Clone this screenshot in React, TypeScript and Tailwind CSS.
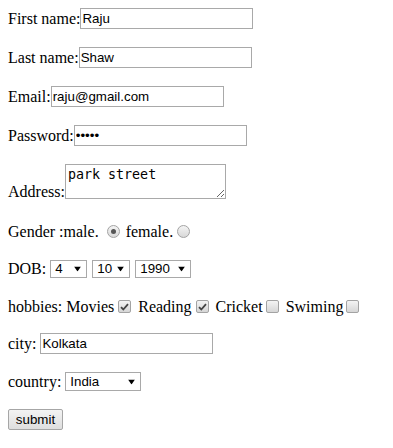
import React from "react";

const serif = "font-['Liberation_Serif','Times_New_Roman',serif]";
const sans = "font-['Liberation_Sans',Arial,sans-serif]";

// plain text field, old-style grey border
function TextField({ value, type = "text", width = "w-[173px]" }: { value: string; type?: string; width?: string }) {
  return (
    <input
      type={type}
      defaultValue={value}
      className={`${sans} ${width} h-[21px] border border-[#a9a9a9] bg-white px-[1px] text-[13.33px] text-black outline-none`}
    />
  );
}

function Arrow() {
  return (
    <svg width="7" height="5" viewBox="0 0 7 5" className="pointer-events-none absolute top-1/2 right-[6px] -translate-y-1/2">
      <path d="M0 0h7L3.5 5z" fill="#000" />
    </svg>
  );
}

function Select({ value, options, width, height = "h-[18px]" }: { value: string; options: string[]; width: string; height?: string }) {
  return (
    <span className="relative inline-flex">
      <select
        defaultValue={value}
        className={`${sans} ${width} ${height} appearance-none border border-[#a9a9a9] bg-white pl-[4px] text-[13.33px] leading-none text-black outline-none`}
      >
        {options.map((o) => (
          <option key={o}>{o}</option>
        ))}
      </select>
      <Arrow />
    </span>
  );
}

function Radio({ checked, className }: { checked?: boolean; className?: string }) {
  return (
    <span
      className={`relative inline-flex h-[13px] w-[13px] items-center justify-center rounded-full border border-[#a3a3a3] bg-gradient-to-b from-[#f4f4f4] to-[#d8d8d8] ${className ?? ""}`}
    >
      {checked && <span className="h-[5px] w-[5px] rounded-full bg-[#555]" />}
    </span>
  );
}

function Check({ checked, className }: { checked?: boolean; className?: string }) {
  return (
    <span
      className={`relative inline-flex h-[13px] w-[13px] items-center justify-center rounded-[2px] border border-[#a3a3a3] bg-gradient-to-b from-[#f4f4f4] to-[#d6d6d6] ${className ?? ""}`}
    >
      {checked && (
        <svg width="9" height="8" viewBox="0 0 9 8">
          <path d="M1 4.2l2.3 2.3L8 1.2" fill="none" stroke="#444" strokeWidth="1.8" />
        </svg>
      )}
    </span>
  );
}

export default function App() {
  const days = Array.from({ length: 31 }, (_, i) => String(i + 1));
  const months = Array.from({ length: 12 }, (_, i) => String(i + 1));
  const years = Array.from({ length: 30 }, (_, i) => String(1980 + i));

  return (
    <form className={`${serif} flex min-h-[448px] flex-col bg-white pt-2 pl-2 text-[16px] text-black`}>
      <div className="flex h-[21px] items-center">
        <span>First name:</span>
        <TextField value="Raju" />
      </div>

      <div className="mt-[18px] flex h-[21px] items-center">
        <span>Last name:</span>
        <TextField value="Shaw" />
      </div>

      <div className="mt-[18px] flex h-[21px] items-center">
        <span>Email:</span>
        <TextField value="raju@gmail.com" />
      </div>

      <div className="mt-[18px] flex h-[21px] items-center">
        <span>Password:</span>
        <TextField value="raju1" type="password" />
      </div>

      <div className="mt-[18px] flex items-end">
        <span className="leading-[14px]">Address:</span>
        <textarea
          defaultValue="park street"
          className="h-[35px] w-[161px] resize border border-[#a9a9a9] bg-white p-[2px] font-['DejaVu_Sans_Mono','Liberation_Mono',monospace] text-[13.33px] leading-[15px] text-black outline-none"
        />
      </div>

      <div className="mt-[22px] flex h-[21px] items-center">
        <span>Gender :male.</span>
        <Radio checked className="ml-[8px]" />
        <span className="ml-[6px]">female.</span>
        <Radio className="ml-[4px]" />
      </div>

      <div className="mt-[16px] flex h-[21px] items-center">
        <span>DOB:</span>
        <span className="ml-[4px] flex gap-[5px]">
          <Select value="4" options={days} width="w-[37px]" />
          <Select value="10" options={months} width="w-[38px]" />
          <Select value="1990" options={years} width="w-[56px]" />
        </span>
      </div>

      <div className="mt-[17px] flex h-[21px] items-center">
        <span>hobbies: Movies</span>
        <Check checked className="ml-[4px]" />
        <span className="ml-[7px]">Reading</span>
        <Check checked className="ml-[4px]" />
        <span className="ml-[7px]">Cricket</span>
        <Check className="ml-[3px]" />
        <span className="ml-[7px]">Swiming</span>
        <Check className="ml-[3px]" />
      </div>

      <div className="mt-[16px] flex h-[21px] items-center">
        <span>city:</span>
        <span className="ml-[4px] flex">
          <TextField value="Kolkata" />
        </span>
      </div>

      <div className="mt-[17px] flex h-[21px] items-center">
        <span>country:</span>
        <span className="ml-[4px] flex">
          <Select value="India" options={["India", "Nepal", "Bhutan", "Sri Lanka"]} width="w-[76px]" height="h-[19px]" />
        </span>
      </div>

      <div className="mt-[17px] flex h-[21px] items-center">
        <button
          type="button"
          className={`${sans} h-[21px] w-[55px] rounded-[2px] border border-[#a6a6a6] bg-gradient-to-b from-[#f3f3f3] to-[#dedede] text-[13.33px] text-black`}
        >
          submit
        </button>
      </div>
    </form>
  );
}
